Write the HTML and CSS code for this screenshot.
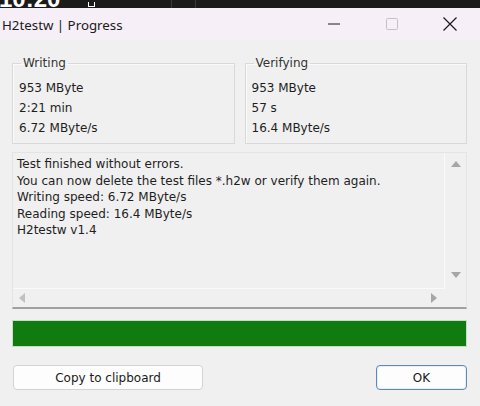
FILE: index.html
```html
<!DOCTYPE html>
<html lang="en">
<head>
  <meta charset="UTF-8">
  <title>H2testw | Progress</title>
  <link rel="stylesheet" href="styles.css">
</head>
<body>
  <div class="desk">
    <span class="clock">10:20</span>
    <span class="tray-icon"></span>
    <span class="sep"></span>
    <span class="sep"></span>
  </div>

  <div class="window">
    <div class="titlebar">
      <span class="title">H2testw | Progress</span>
      <div class="caption-buttons">
        <span class="cap">
          <svg width="16" height="16" viewBox="0 0 16 16"><path d="M2 8h12" stroke="#1a1a1a" stroke-width="1"/></svg>
        </span>
        <span class="cap">
          <svg width="16" height="16" viewBox="0 0 16 16"><rect x="2.5" y="2.5" width="11" height="11" rx="1" fill="none" stroke="#c4c0c6" stroke-width="1"/></svg>
        </span>
        <span class="cap">
          <svg width="16" height="16" viewBox="0 0 16 16"><path d="M1.5 1.5l13 13M14.5 1.5l-13 13" stroke="#1a1a1a" stroke-width="1.2"/></svg>
        </span>
      </div>
    </div>

    <div class="content">
      <div class="groups">
        <fieldset class="group">
          <legend>Writing</legend>
          <div>953 MByte</div>
          <div>2:21 min</div>
          <div>6.72 MByte/s</div>
        </fieldset>
        <fieldset class="group">
          <legend>Verifying</legend>
          <div>953 MByte</div>
          <div>57 s</div>
          <div>16.4 MByte/s</div>
        </fieldset>
      </div>

      <div class="log">
        <div class="log-text">
          Test finished without errors.<br>
          You can now delete the test files *.h2w or verify them again.<br>
          Writing speed: 6.72 MByte/s<br>
          Reading speed: 16.4 MByte/s<br>
          H2testw v1.4
        </div>
        <div class="vscroll">
          <svg width="12" height="10" viewBox="0 0 12 10"><path d="M6 2l5 6H1z" fill="#a6a6a6"/></svg>
          <svg width="12" height="10" viewBox="0 0 12 10"><path d="M6 8l5-6H1z" fill="#a6a6a6"/></svg>
        </div>
        <div class="hscroll">
          <svg width="10" height="12" viewBox="0 0 10 12"><path d="M2 6l6-5v10z" fill="#c0c0c0"/></svg>
          <svg width="10" height="12" viewBox="0 0 10 12"><path d="M8 6L2 1v10z" fill="#a6a6a6"/></svg>
        </div>
        <div class="corner"></div>
      </div>

      <div class="progress"><div class="progress-fill" style="width: 100%"></div></div>

      <div class="actions">
        <button class="btn btn-copy">Copy to clipboard</button>
        <button class="btn btn-ok">OK</button>
      </div>
    </div>
  </div>
</body>
</html>
```

FILE: styles.css
```css
html, body {
  margin: 0;
  height: 100%;
}
body {
  background: #1b1b1b;
  font-family: "DejaVu Sans", Verdana, sans-serif;
  overflow: hidden;
}
.desk {
  height: 8px;
  overflow: hidden;
  display: flex;
  align-items: flex-end;
}
.clock {
  color: #fff;
  font-family: "Liberation Sans", Arial, sans-serif;
  font-weight: bold;
  font-size: 24px;
  line-height: 24px;
  margin-bottom: -3px;
  margin-left: -1px;
  width: 89px;
  flex: none;
}
.tray-icon {
  width: 7px;
  height: 5px;
  margin-bottom: 1px;
  border: 1px solid #fff;
  border-top: none;
  box-sizing: border-box;
  margin-right: 76px;
}
.sep {
  width: 1px;
  height: 8px;
  background: #3a3a3a;
  margin-right: 23px;
}
.window {
  background: #f0f0f0;
  border-radius: 0 9px 0 0;
  height: 398px;
  display: flex;
  flex-direction: column;
}
.titlebar {
  height: 32px;
  background: #f7eff8;
  display: flex;
  align-items: center;
  justify-content: space-between;
  flex: none;
}
.title {
  font-family: "Noto Sans", "Open Sans", sans-serif;
  font-size: 13.3px;
  color: #1a1a1a;
  margin-left: 2px;
  margin-top: 1px;
}
.caption-buttons {
  display: flex;
  margin-right: 1px;
}
.cap {
  width: 58px;
  display: flex;
  justify-content: center;
}
.content {
  padding: 16px 13px 0 12px;
  font-size: 12px;
  color: #1e1e1e;
}
.groups {
  display: grid;
  grid-template-columns: 1fr 1fr;
  gap: 10px;
}
.group {
  margin: 0;
  border: 1px solid #d9d9d9;
  box-shadow: inset 1px 1px 0 #fafafa;
  padding: 8px 6px 5px 6px;
  line-height: 20px;
}
.group legend {
  padding: 0 2px;
  margin-left: 2px;
  line-height: 14px;
  color: #333;
}
.log {
  margin-top: 8px;
  height: 157px;
  border: 1px solid #e4e4e4;
  border-bottom: 2px solid #a0a0a0;
  display: grid;
  grid-template-columns: 1fr 21px;
  grid-template-rows: 1fr 18px;
  box-sizing: border-box;
}
.log-text {
  padding: 3px 4px;
  line-height: 16.5px;
  border-right: 1px solid #fafafa;
  border-bottom: 1px solid #fafafa;
}
.vscroll {
  display: flex;
  flex-direction: column;
  justify-content: space-between;
  align-items: center;
  padding: 6px 0 9px;
}
.hscroll {
  display: flex;
  justify-content: space-between;
  align-items: center;
  padding: 0 6px 0 4px;
}
.progress {
  margin-top: 11px;
  height: 27px;
  border: 1px solid #c6dcc6;
  box-sizing: border-box;
}
.progress-fill {
  height: 100%;
  background: #107c10;
}
.actions {
  margin-top: 18px;
  display: flex;
  justify-content: space-between;
  align-items: center;
}
.btn {
  font-family: "DejaVu Sans", Verdana, sans-serif;
  font-size: 12px;
  color: #1a1a1a;
  background: #fdfdfd;
  border: 1px solid #d3d3d3;
  border-radius: 4px;
  height: 25px;
  padding: 0;
}
.btn-copy {
  width: 190px;
  margin-left: 1px;
}
.btn-ok {
  width: 91px;
  border-color: #5b8ab6;
  box-shadow: inset 0 0 0 1px #e8eef4;
}
```
